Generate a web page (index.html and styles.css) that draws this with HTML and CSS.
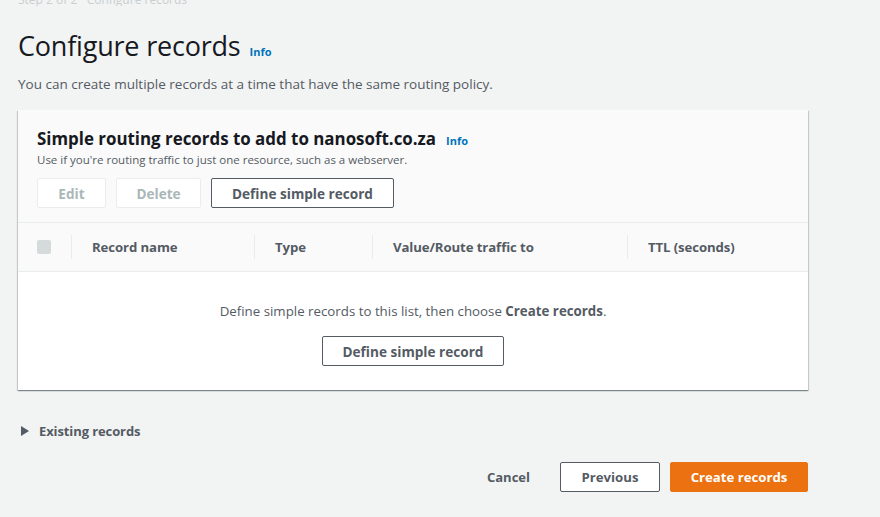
FILE: index.html
```html
<!DOCTYPE html>
<html>
<head>
<meta charset="utf-8">
<link rel="stylesheet" href="styles.css">
</head>
<body>
<div class="page">
  <div class="crumb">Step 2 of 2 · Configure records</div>
  <div class="title-row">
    <h1 class="title">Configure records</h1>
    <a class="info info-lg">Info</a>
  </div>
  <p class="desc">You can create multiple records at a time that have the same routing policy.</p>

  <div class="container">
    <div class="c-head">
      <div class="c-title-row">
        <h2 class="c-title">Simple routing records to add to nanosoft.co.za</h2>
        <a class="info">Info</a>
      </div>
      <div class="c-sub">Use if you're routing traffic to just one resource, such as a webserver.</div>
      <div class="actions">
        <button class="btn disabled btn-edit">Edit</button>
        <button class="btn disabled btn-delete">Delete</button>
        <button class="btn btn-define">Define simple record</button>
      </div>
    </div>
    <div class="thead">
      <div class="th th-check"><span class="checkbox"></span></div>
      <div class="th th-name">Record name</div>
      <div class="th th-type">Type</div>
      <div class="th th-value">Value/Route traffic to</div>
      <div class="th th-ttl">TTL (seconds)</div>
    </div>
    <div class="empty">
      <p class="empty-text">Define simple records to this list, then choose <b>Create records</b>.</p>
      <button class="btn btn-define2">Define simple record</button>
    </div>
  </div>

  <div class="expander">
    <span class="caret"></span>
    <span class="exp-label">Existing records</span>
  </div>

  <div class="footer">
    <button class="link-btn">Cancel</button>
    <button class="btn btn-prev">Previous</button>
    <button class="btn primary">Create records</button>
  </div>
</div>
</body>
</html>
```

FILE: styles.css
```css
* { box-sizing: border-box; }
html, body { margin: 0; padding: 0; }
body {
  background: #f2f3f3;
  font-family: "Open Sans", "Noto Sans", sans-serif;
  color: #16191f;
  width: 880px;
  height: 517px;
  overflow: hidden;
}
.page {
  padding: 0 72px 0 18px;
}
.crumb {
  height: 6px;
  overflow: hidden;
  font-size: 12px;
  line-height: 0;
  color: #c8cfd0;
}
.title-row {
  display: flex;
  align-items: baseline;
  margin-top: 22px;
  gap: 9px;
}
.title {
  margin: 0;
  font-size: 27px;
  font-weight: 400;
  line-height: 36px;
  color: #16191f;
  letter-spacing: -0.2px;
}
.info {
  color: #0073bb;
  font-weight: 700;
  font-size: 11px;
}
.desc {
  margin: 10px 0 0 0;
  font-size: 13.5px;
  line-height: 20px;
  color: #545b64;
}
.container {
  margin-top: 16px;
  width: 790px;
  background: #fff;
  box-shadow: 0 1px 1px 0 rgba(0,28,36,.3), 1px 1px 1px 0 rgba(0,28,36,.15), -1px 1px 1px 0 rgba(0,28,36,.15);
}
.c-head {
  background: #fafafa;
  padding: 18px 19px 14px 19px;
  border-bottom: 1px solid #eaeded;
}
.c-title-row {
  display: flex;
  align-items: baseline;
  gap: 10px;
}
.c-title {
  margin: 0;
  font-size: 16.9px;
  font-weight: 700;
  line-height: 22px;
}
.c-sub {
  font-size: 11.5px;
  line-height: 16px;
  color: #545b64;
  margin-top: 2px;
}
.actions {
  display: flex;
  gap: 10px;
  margin-top: 10px;
}
.btn {
  font-family: inherit;
  font-weight: 700;
  font-size: 13.6px;
  height: 30px;
  border: 1px solid #545b64;
  background: #fff;
  color: #545b64;
  border-radius: 2px;
  padding: 0;
}
.btn.disabled {
  border-color: #eaeded;
  color: #aab7b8;
}
.btn-edit { width: 69px; }
.btn-delete { width: 85px; }
.btn-define { width: 183px; }
.thead {
  display: flex;
  align-items: center;
  height: 49px;
  background: #fafafa;
  border-bottom: 1px solid #eaeded;
}
.th {
  font-size: 13.2px;
  font-weight: 700;
  color: #545b64;
  height: 24px;
  line-height: 24px;
  padding-left: 20px;
  border-left: 1px solid #eaeded;
  letter-spacing: -0.1px;
}
.th-check {
  border-left: none;
  width: 53px;
  padding-left: 19px;
  display: flex;
  align-items: center;
}
.checkbox {
  width: 14px;
  height: 14px;
  background: #d5dbdb;
  border-radius: 2px;
}
.th-name { width: 183px; }
.th-type { width: 118px; }
.th-value { width: 255px; }
.th-ttl { flex: 1; }
.empty {
  background: #fff;
  padding: 30px 0 24px;
  display: flex;
  flex-direction: column;
  align-items: center;
}
.empty-text {
  margin: 0;
  font-size: 13.3px;
  line-height: 18px;
  color: #545b64;
}
.empty-text b { font-weight: 700; color: #545b64; }
.btn-define2 {
  margin-top: 16px;
  width: 182px;
}
.expander {
  display: flex;
  align-items: center;
  margin-top: 34px;
  height: 14px;
}
.caret {
  width: 0; height: 0;
  border-top: 5px solid transparent;
  border-bottom: 5px solid transparent;
  border-left: 8px solid #545b64;
  margin-left: 3px;
  margin-right: 10px;
}
.exp-label {
  font-size: 13px;
  font-weight: 700;
  color: #545b64;
  letter-spacing: -0.1px;
}
.footer {
  width: 790px;
  display: flex;
  justify-content: flex-end;
  align-items: center;
  gap: 10px;
  margin-top: 24px;
}
.link-btn {
  font-family: inherit;
  font-weight: 700;
  font-size: 13px;
  color: #545b64;
  background: none;
  border: none;
  height: 30px;
  padding: 0 20px;
}
.btn-prev { width: 100px; font-size: 13.2px; }
.btn.primary {
  background: #ec7211;
  border-color: #ec7211;
  color: #fff;
  width: 138px;
  font-size: 13.2px;
}
```
